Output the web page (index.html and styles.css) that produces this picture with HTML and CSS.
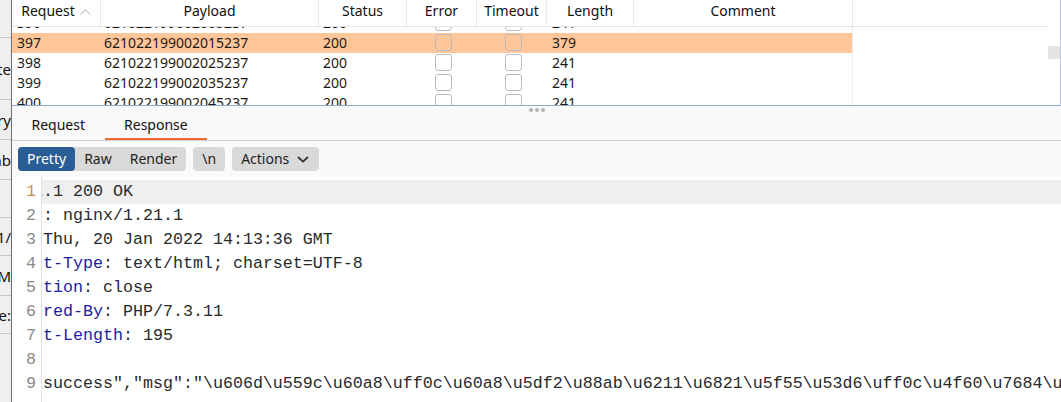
FILE: index.html
```html
<!DOCTYPE html>
<html lang="en">
<head>
<meta charset="utf-8">
<title>Intruder results</title>
<link rel="stylesheet" href="styles.css">
</head>
<body>
<div class="screen">
  <div class="bg-strip">
    <div class="strip-item s38"></div>
    <div class="strip-item s62"><span>Gate</span></div>
    <div class="strip-item s40"><span>Query</span></div>
    <div class="strip-item s40"><span>Numb</span></div>
    <div class="strip-item s38"></div>
    <div class="strip-item s38"><span>11/</span></div>
    <div class="strip-item s40"><span>M</span></div>
    <div class="strip-item s38"><span>Size:</span></div>
    <div class="strip-item s68"></div>
  </div>

  <div class="window">
    <div class="results">
      <div class="table">
        <div class="thead">
          <div class="th">Request
            <svg class="sort" width="11" height="6" viewBox="0 0 11 6"><polyline points="0.5,5.5 5.5,0.8 10.5,5.5" fill="none" stroke="#a8a8a8" stroke-width="1"/></svg>
          </div>
          <div class="th">Payload</div>
          <div class="th">Status</div>
          <div class="th">Error</div>
          <div class="th">Timeout</div>
          <div class="th">Length</div>
          <div class="th">Comment</div>
          <div class="th last"></div>
        </div>
        <div class="tbody">
          <div class="rows">
            <div class="row">
              <div class="td c-req">396</div><div class="td c-pay">621022199002005237</div><div class="td c-st">200</div>
              <div class="td c-chk"><span class="box"></span></div><div class="td c-chk"><span class="box"></span></div>
              <div class="td c-len">241</div><div class="td c-com"></div><div class="td c-rest"></div>
            </div>
            <div class="row sel">
              <div class="td c-req">397</div><div class="td c-pay">621022199002015237</div><div class="td c-st">200</div>
              <div class="td c-chk"><span class="box"></span></div><div class="td c-chk"><span class="box"></span></div>
              <div class="td c-len">379</div><div class="td c-com"></div><div class="td c-rest"></div>
            </div>
            <div class="row">
              <div class="td c-req">398</div><div class="td c-pay">621022199002025237</div><div class="td c-st">200</div>
              <div class="td c-chk"><span class="box"></span></div><div class="td c-chk"><span class="box"></span></div>
              <div class="td c-len">241</div><div class="td c-com"></div><div class="td c-rest"></div>
            </div>
            <div class="row">
              <div class="td c-req">399</div><div class="td c-pay">621022199002035237</div><div class="td c-st">200</div>
              <div class="td c-chk"><span class="box"></span></div><div class="td c-chk"><span class="box"></span></div>
              <div class="td c-len">241</div><div class="td c-com"></div><div class="td c-rest"></div>
            </div>
            <div class="row">
              <div class="td c-req">400</div><div class="td c-pay">621022199002045237</div><div class="td c-st">200</div>
              <div class="td c-chk"><span class="box"></span></div><div class="td c-chk"><span class="box"></span></div>
              <div class="td c-len">241</div><div class="td c-com"></div><div class="td c-rest"></div>
            </div>
          </div>
        </div>
      </div>
      <div class="vscroll"><div class="thumb"></div></div>
    </div>

    <div class="splitter"><span class="dot"></span><span class="dot"></span><span class="dot"></span></div>

    <div class="tabs">
      <div class="tab">Request</div>
      <div class="tab active">Response</div>
    </div>

    <div class="toolbar">
      <div class="seg">
        <div class="btn on">Pretty</div>
        <div class="btn">Raw</div>
        <div class="btn">Render</div>
      </div>
      <div class="seg"><div class="btn">\n</div></div>
      <div class="seg">
        <div class="btn">Actions
          <svg class="chev" width="12" height="7" viewBox="0 0 12 7"><polyline points="1,1 6,5.6 11,1" fill="none" stroke="#333" stroke-width="1.8"/></svg>
        </div>
      </div>
    </div>

    <div class="editor">
      <div class="gutter">
        <div class="num cur">1</div>
        <div class="num">2</div>
        <div class="num">3</div>
        <div class="num">4</div>
        <div class="num">5</div>
        <div class="num">6</div>
        <div class="num">7</div>
        <div class="num">8</div>
        <div class="num">9</div>
      </div>
      <div class="code">
        <div class="code-inner">
          <div class="ln cur">HTTP/1.1 200 OK</div>
          <div class="ln"><span class="k">Server</span>: nginx/1.21.1</div>
          <div class="ln"><span class="k">Date</span>: Thu, 20 Jan 2022 14:13:36 GMT</div>
          <div class="ln"><span class="k">Content-Type</span>: text/html; charset=UTF-8</div>
          <div class="ln"><span class="k">Connection</span>: close</div>
          <div class="ln"><span class="k">X-Powered-By</span>: PHP/7.3.11</div>
          <div class="ln"><span class="k">Content-Length</span>: 195</div>
          <div class="ln"></div>
          <div class="ln">{"r":"success","msg":"\u606d\u559c\u60a8\uff0c\u60a8\u5df2\u88ab\u6211\u6821\u5f55\u53d6\uff0c\u4f60\u7684\u5b66\u53f7\u4e3a"}</div>
        </div>
      </div>
    </div>
  </div>
</div>
</body>
</html>
```

FILE: styles.css
```css
html, body {
  margin: 0;
  padding: 0;
  background: #ffffff;
}

body {
  font-family: "Noto Sans", "Open Sans", sans-serif;
  font-size: 14px;
  color: #1a1a1a;
  overflow: hidden;
}

.screen {
  display: flex;
  width: 1061px;
  height: 402px;
  overflow: hidden;
}

/* background window sliver */
.bg-strip {
  width: 11px;
  flex: none;
  background: #efefef;
  display: flex;
  flex-direction: column;
  overflow: hidden;
}

.strip-item {
  flex: none;
  box-sizing: border-box;
  border-bottom: 1px solid #c6c6c6;
  display: flex;
  align-items: center;
  justify-content: flex-end;
  overflow: hidden;
  white-space: nowrap;
  font-size: 15px;
  color: #111;
}

.s38 { height: 38px; }
.s40 { height: 40px; }
.s62 { height: 62px; }
.s68 { height: 68px; border-bottom: none; }

/* main window */
.window {
  flex: 1;
  min-width: 0;
  border-left: 1px solid #6e6e6e;
  display: flex;
  flex-direction: column;
  background: #f9f9f9;
}

.results {
  height: 106px;
  flex: none;
  box-sizing: border-box;
  display: flex;
  background: #fff;
  border-right: 1px solid #b9cbe4;
  border-bottom: 1px solid #8eaad2;
}

.table {
  flex: 1;
  min-width: 0;
  display: flex;
  flex-direction: column;
}

.thead,
.row {
  display: grid;
  grid-template-columns: 89px 218px 88px 70px 70px 87px 219px 1fr;
}

.thead {
  height: 27px;
  flex: none;
  box-sizing: border-box;
  border-bottom: 1px solid #e4e4e4;
}

.th {
  border-right: 1px solid #e9e9e9;
  display: flex;
  align-items: flex-start;
  justify-content: center;
  line-height: 20px;
  padding-top: 1px;
  color: #111;
  white-space: nowrap;
}

.th.last {
  border-right: none;
}

.sort {
  margin-left: 5px;
  margin-top: 8px;
}

.tbody {
  flex: 1;
  overflow: hidden;
}

.rows {
  margin-top: -14px;
}

.row {
  height: 20px;
  line-height: 20px;
}

.td {
  white-space: nowrap;
  overflow: hidden;
}

.row.sel .td {
  background: #ffc699;
}

.row.sel .td.c-rest {
  background: transparent;
}

.c-req { padding-left: 5px; }
.c-pay { padding-left: 3px; }
.c-st { padding-left: 4px; }
.c-len { padding-left: 5px; }
.c-com { border-right: 1px solid #f0f0f0; }

.c-chk {
  padding-left: 28px;
  padding-top: 1px;
  box-sizing: border-box;
}

.box {
  display: block;
  width: 15px;
  height: 15px;
  border: 1px solid #bababa;
  border-radius: 3px;
}

.vscroll {
  width: 12px;
  flex: none;
  background: #fff;
}

.thumb {
  margin-top: 46px;
  height: 13px;
  background: #e4e4e4;
}

/* splitter */
.splitter {
  height: 6px;
  flex: none;
  display: flex;
  justify-content: center;
  align-items: center;
  gap: 2px;
  padding-top: 1px;
  box-sizing: border-box;
}

.dot {
  width: 4px;
  height: 4px;
  border-radius: 50%;
  background: #b3b3b3;
}

/* tabs */
.tabs {
  height: 29px;
  flex: none;
  box-sizing: border-box;
  display: flex;
  border-bottom: 1px solid #cdcdcd;
}

.tab {
  padding: 0 19.5px;
  line-height: 26px;
  border-bottom: 2px solid transparent;
  color: #111;
}

.tab.active {
  border-bottom-color: #f26a35;
}

/* toolbar */
.toolbar {
  height: 36px;
  flex: none;
  box-sizing: border-box;
  padding: 6px 0 0 6px;
  display: flex;
  gap: 7px;
  background: #fafafa;
}

.seg {
  display: flex;
  height: 24px;
  background: #d9d9d9;
  border-radius: 4px;
}

.btn {
  display: flex;
  align-items: flex-start;
  padding: 0 9px;
  line-height: 22px;
  padding-top: 1px;
  color: #1e1e1e;
  border-radius: 4px;
}

.btn.on {
  background: #2a5d95;
  color: #ffffff;
}

.chev {
  margin-left: 8px;
  margin-top: 8px;
  margin-right: 1px;
}

/* editor */
.editor {
  flex: 1;
  display: flex;
  background: #ffffff;
  min-height: 0;
}

.gutter {
  flex: none;
  width: 24px;
  border-right: 1px solid #e2e2e2;
  padding-top: 3px;
  padding-right: 5px;
  text-align: right;
  font-family: "Liberation Mono", monospace;
  font-size: 16.67px;
  line-height: 24px;
  color: #8a8a8a;
}

.num {
  height: 24px;
}

.num.cur {
  color: #c98d5a;
}

.code {
  flex: 1;
  min-width: 0;
  overflow: hidden;
  padding-top: 3px;
}

.code-inner {
  margin-left: -59px;
  font-family: "Liberation Mono", monospace;
  font-size: 16.67px;
  line-height: 24px;
  color: #2a2a2a;
}

.ln {
  height: 24px;
  white-space: pre;
}

.ln.cur {
  background: #efefef;
}

.k {
  color: #22229e;
}
```
